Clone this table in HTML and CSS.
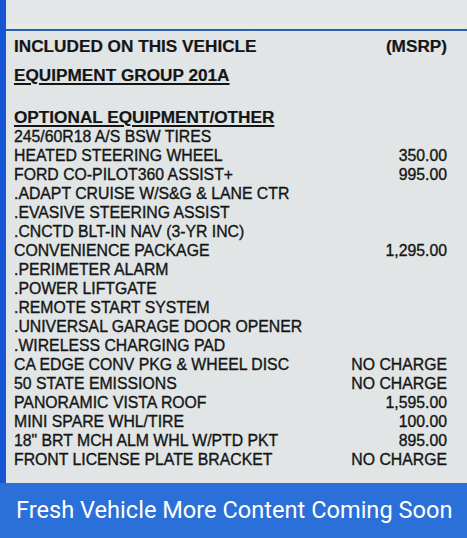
FILE: index.html
```html
<!DOCTYPE html>
<html>
<head>
<meta charset="utf-8">
<link rel="stylesheet" href="styles.css">
</head>
<body>
<div class="page">
  <div class="sheet">
    <div class="edge"></div>
    <div class="content">
      <div class="topband"></div>
      <div class="rule"></div>
      <div class="list">
        <div class="row head"><span>INCLUDED ON THIS VEHICLE</span><span>(MSRP)</span></div>
        <div class="row group"><span class="ul">EQUIPMENT GROUP 201A</span></div>
        <div class="row section"><span class="ul">OPTIONAL EQUIPMENT/OTHER</span></div>
        <div class="row"><span>245/60R18 A/S BSW TIRES</span></div>
        <div class="row"><span>HEATED STEERING WHEEL</span><span>350.00</span></div>
        <div class="row"><span>FORD CO-PILOT360 ASSIST+</span><span>995.00</span></div>
        <div class="row"><span>.ADAPT CRUISE W/S&amp;G &amp; LANE CTR</span></div>
        <div class="row"><span>.EVASIVE STEERING ASSIST</span></div>
        <div class="row"><span>.CNCTD BLT-IN NAV (3-YR INC)</span></div>
        <div class="row"><span>CONVENIENCE PACKAGE</span><span>1,295.00</span></div>
        <div class="row"><span>.PERIMETER ALARM</span></div>
        <div class="row"><span>.POWER LIFTGATE</span></div>
        <div class="row"><span>.REMOTE START SYSTEM</span></div>
        <div class="row"><span>.UNIVERSAL GARAGE DOOR OPENER</span></div>
        <div class="row"><span>.WIRELESS CHARGING PAD</span></div>
        <div class="row"><span>CA EDGE CONV PKG &amp; WHEEL DISC</span><span>NO CHARGE</span></div>
        <div class="row"><span>50 STATE EMISSIONS</span><span>NO CHARGE</span></div>
        <div class="row"><span>PANORAMIC VISTA ROOF</span><span>1,595.00</span></div>
        <div class="row"><span>MINI SPARE WHL/TIRE</span><span>100.00</span></div>
        <div class="row"><span>18" BRT MCH ALM WHL W/PTD PKT</span><span>895.00</span></div>
        <div class="row"><span>FRONT LICENSE PLATE BRACKET</span><span>NO CHARGE</span></div>
      </div>
    </div>
  </div>
  <div class="banner">Fresh Vehicle More Content Coming Soon</div>
</div>
</body>
</html>
```
FILE: styles.css
```css
html, body {
  margin: 0;
  padding: 0;
  background: #e1e5e6;
}
.page {
  width: 467px;
  height: 538px;
  display: flex;
  flex-direction: column;
  overflow: hidden;
}
.sheet {
  flex: 1;
  display: flex;
  background: #e1e5e6;
}
.edge {
  width: 6px;
  background: #1656d4;
}
.content {
  flex: 1;
  display: flex;
  flex-direction: column;
}
.topband {
  height: 29px;
  background: linear-gradient(#e2e6e7 0, #e2e6e7 24px, #e6ebe4 25px, #e3e8e6 29px);
}
.rule {
  height: 2px;
  background: #2b5fb5;
}
.list {
  padding: 5px 20px 0 8px;
  font-family: "Liberation Sans", Arial, sans-serif;
  font-size: 15.8px;
  color: #151515;
  -webkit-text-stroke: 0.35px #151515;
}
.row {
  display: flex;
  justify-content: space-between;
  height: 19px;
  line-height: 19px;
  white-space: nowrap;
}
.head, .group, .section {
  font-weight: bold;
  font-size: 17.2px;
  height: 20px;
  line-height: 20px;
  -webkit-text-stroke: 0.2px #151515;
}
.group { margin-top: 9px; }
.section { margin-top: 22px; }
.ul {
  text-decoration: underline;
  text-decoration-thickness: 2px;
  text-underline-offset: 2px;
}
.banner {
  height: 55px;
  background: #2b6fd9;
  color: #ffffff;
  font-family: Roboto, "Liberation Sans", sans-serif;
  font-size: 23.6px;
  line-height: 55px;
  padding-left: 16px;
  white-space: nowrap;
}
```
